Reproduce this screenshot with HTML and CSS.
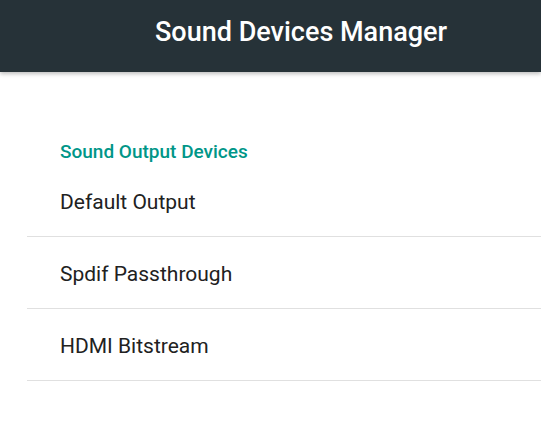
FILE: index.html
```html
<!DOCTYPE html>
<html>
<head>
    <title>Sound Devices Manager</title>
    <link rel="stylesheet" href="styles.css">
</head>
<body>
    <div class="toolbar">
        <h1>Sound Devices Manager</h1>
    </div>

    <div class="content">
        <h2 class="category">Sound Output Devices</h2>
        <div class="item">Default Output</div>
        <div class="item">Spdif Passthrough</div>
        <div class="item">HDMI Bitstream</div>
    </div>
</body>
</html>
```

FILE: styles.css
```css
body { margin: 0; font-family: Roboto, "Noto Sans", sans-serif; background: #fff; overflow: hidden; }
.toolbar { height: 72px; background-color: #263238; box-shadow: 0 2px 4px rgba(0,0,0,0.25); display: flex; align-items: center; padding-left: 155px; }
.toolbar h1 { margin: 0; color: #fff; font-size: 27px; font-weight: 500; line-height: 1; margin-top: -8px; }
.content { margin-top: 67px; padding-left: 27px; }
.category { margin: 0; padding-left: 33px; color: #009688; font-size: 19px; font-weight: 500; line-height: 26px; }
.item { height: 72px; display: flex; align-items: center; padding-left: 33px; padding-top: 2px; box-sizing: border-box; border-bottom: 1px solid #e0e0e0; font-size: 21px; color: #212121; }
```
